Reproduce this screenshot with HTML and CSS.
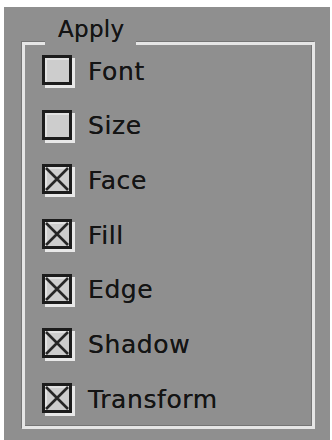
FILE: index.html
```html
<!DOCTYPE html>
<html>
<head>
<meta charset="utf-8">
<link rel="stylesheet" href="styles.css">
</head>
<body>
<div class="panel">
  <div class="group">
    <span class="legend">Apply</span>
    <div class="rows">
      <div class="row"><span class="box"></span><span class="label">Font</span></div>
      <div class="row"><span class="box"></span><span class="label">Size</span></div>
      <div class="row"><span class="box checked"><svg viewBox="0 0 24 24" width="24" height="24"><path d="M1 1 L23 23 M23 1 L1 23"/></svg></span><span class="label">Face</span></div>
      <div class="row"><span class="box checked"><svg viewBox="0 0 24 24" width="24" height="24"><path d="M1 1 L23 23 M23 1 L1 23"/></svg></span><span class="label">Fill</span></div>
      <div class="row"><span class="box checked"><svg viewBox="0 0 24 24" width="24" height="24"><path d="M1 1 L23 23 M23 1 L1 23"/></svg></span><span class="label">Edge</span></div>
      <div class="row"><span class="box checked"><svg viewBox="0 0 24 24" width="24" height="24"><path d="M1 1 L23 23 M23 1 L1 23"/></svg></span><span class="label">Shadow</span></div>
      <div class="row"><span class="box checked"><svg viewBox="0 0 24 24" width="24" height="24"><path d="M1 1 L23 23 M23 1 L1 23"/></svg></span><span class="label">Transform</span></div>
    </div>
  </div>
</div>
</body>
</html>
```
FILE: styles.css
```css
html, body {
  margin: 0;
  padding: 0;
  background: #ffffff;
}
body {
  padding-top: 7px;
}
.panel {
  margin-left: 4px;
  width: 326px;
  height: 433px;
  background: #8f8f8f;
  overflow: hidden;
  box-sizing: border-box;
  padding-top: 35px;
  padding-left: 18px;
}
.group {
  position: relative;
  box-sizing: border-box;
  width: 293px;
  height: 387px;
  border: 3px solid #e6e6e6;
  box-shadow: -1px -1px 0 #757575, inset -1px -1px 0 #757575;
}
.legend {
  position: absolute;
  left: 20px;
  top: -31px;
  padding: 0 12px 0 13px;
  background: #8f8f8f;
  font-family: "DejaVu Sans", sans-serif;
  font-size: 23px;
  line-height: 31px;
  letter-spacing: 0.3px;
  color: #141414;
  text-shadow: 0 0 0.6px rgba(0, 0, 0, 0.7);
}
.rows {
  display: flex;
  flex-direction: column;
  gap: 24.7px;
  padding-top: 10px;
  padding-left: 17px;
}
.row {
  display: flex;
  align-items: center;
  height: 30px;
}
.box {
  box-sizing: border-box;
  width: 30px;
  height: 30px;
  border: 3px solid #1c1c1c;
  background: #cdcdcd;
  box-shadow: 3px 3px 0 #e8e8e8, inset 2px 2px 0 #e2e2e2;
  flex: none;
  display: flex;
  align-items: center;
  justify-content: center;
}
.box svg {
  display: block;
}
.box svg path {
  stroke: #262626;
  stroke-width: 2.6;
  fill: none;
}
.label {
  margin-left: 16px;
  font-family: "DejaVu Sans", sans-serif;
  font-size: 25px;
  letter-spacing: 0.6px;
  color: #141414;
  text-shadow: 0 0 0.6px rgba(0, 0, 0, 0.7);
  line-height: 30px;
  padding-top: 3px;
}
```
